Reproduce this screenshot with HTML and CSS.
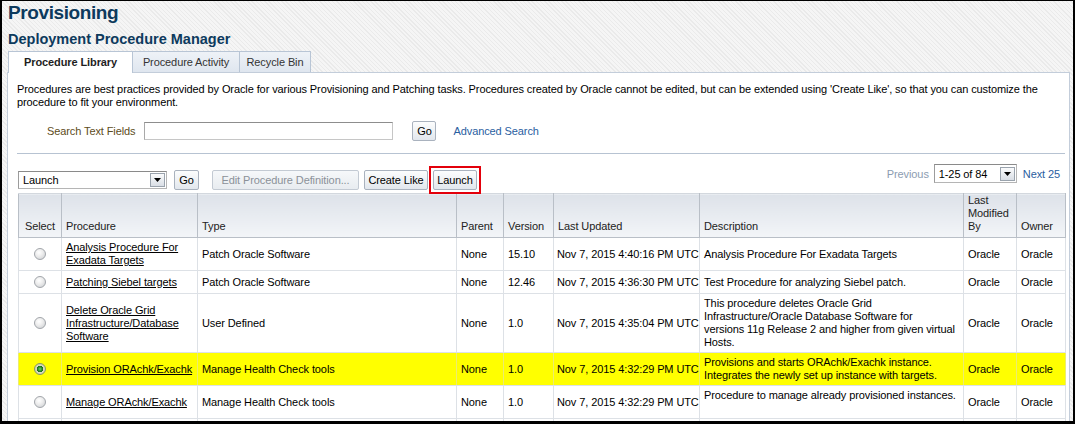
FILE: index.html
```html
<!DOCTYPE html>
<html>
<head>
<meta charset="utf-8">
<title>Provisioning</title>
<link rel="stylesheet" href="styles.css">
</head>
<body>
<div class="frame">
  <h1 class="title">Provisioning</h1>
  <h2 class="subtitle">Deployment Procedure Manager</h2>
  <div class="tabs">
    <span class="tab tab-lib active">Procedure Library</span>
    <span class="tab tab-act">Procedure Activity</span>
    <span class="tab tab-bin">Recycle Bin</span>
  </div>
  <div class="panel">
    <p class="intro">Procedures are best practices provided by Oracle for various Provisioning and Patching tasks. Procedures created by Oracle cannot be edited, but can be extended using 'Create Like', so that you can customize the procedure to fit your environment.</p>
    <div class="search">
      <span class="search-label">Search Text Fields</span>
      <span class="text-input"></span>
      <span class="btn btn-search-go">Go</span>
      <span class="adv-link">Advanced Search</span>
    </div>
    <div class="sep"></div>
    <div class="toolbar">
      <div class="actions">
        <span class="combo combo-action"><span class="combo-value">Launch</span><span class="combo-arrow"><svg width="7" height="4" viewBox="0 0 7 4"><path d="M0 0h7L3.5 4z" fill="#000"/></svg></span></span>
        <span class="btn btn-go">Go</span>
        <span class="btn btn-disabled">Edit Procedure Definition...</span>
        <span class="btn btn-create">Create Like</span>
        <span class="mark"><span class="btn btn-launch">Launch</span></span>
      </div>
      <div class="pager">
        <span class="prev">Previous</span>
        <span class="combo combo-page"><span class="combo-value">1-25 of 84</span><span class="combo-arrow"><svg width="7" height="4" viewBox="0 0 7 4"><path d="M0 0h7L3.5 4z" fill="#000"/></svg></span></span>
        <span class="next">Next 25</span>
      </div>
    </div>
    <table class="grid">
      <colgroup>
        <col class="c-sel"><col class="c-proc"><col class="c-type"><col class="c-par"><col class="c-ver"><col class="c-upd"><col class="c-desc"><col class="c-mod"><col class="c-own">
      </colgroup>
      <thead>
        <tr>
          <th class="th-sel">Select</th>
          <th>Procedure</th>
          <th>Type</th>
          <th>Parent</th>
          <th>Version</th>
          <th>Last Updated</th>
          <th>Description</th>
          <th>Last<br>Modified<br>By</th>
          <th>Owner</th>
        </tr>
      </thead>
      <tbody>
        <tr>
          <td class="sel"><span class="radio"></span></td>
          <td><span class="plink">Analysis Procedure For Exadata Targets</span></td>
          <td>Patch Oracle Software</td>
          <td>None</td>
          <td>15.10</td>
          <td class="upd">Nov 7, 2015 4:40:16 PM UTC</td>
          <td>Analysis Procedure For Exadata Targets</td>
          <td>Oracle</td>
          <td>Oracle</td>
        </tr>
        <tr>
          <td class="sel"><span class="radio"></span></td>
          <td><span class="plink">Patching Siebel targets</span></td>
          <td>Patch Oracle Software</td>
          <td>None</td>
          <td>12.46</td>
          <td class="upd">Nov 7, 2015 4:36:30 PM UTC</td>
          <td>Test Procedure for analyzing Siebel patch.</td>
          <td>Oracle</td>
          <td>Oracle</td>
        </tr>
        <tr>
          <td class="sel"><span class="radio"></span></td>
          <td><span class="plink">Delete Oracle Grid Infrastructure/Database Software</span></td>
          <td>User Defined</td>
          <td>None</td>
          <td>1.0</td>
          <td class="upd">Nov 7, 2015 4:35:04 PM UTC</td>
          <td class="nowrap">This procedure deletes Oracle Grid<br>Infrastructure/Oracle Database Software for<br>versions 11g Release 2 and higher from given virtual<br>Hosts.</td>
          <td>Oracle</td>
          <td>Oracle</td>
        </tr>
        <tr class="hl">
          <td class="sel"><span class="radio on"></span></td>
          <td><span class="plink">Provision ORAchk/Exachk</span></td>
          <td>Manage Health Check tools</td>
          <td>None</td>
          <td>1.0</td>
          <td class="upd">Nov 7, 2015 4:32:29 PM UTC</td>
          <td class="nowrap">Provisions and starts ORAchk/Exachk instance.<br>Integrates the newly set up instance with targets.</td>
          <td>Oracle</td>
          <td>Oracle</td>
        </tr>
        <tr>
          <td class="sel"><span class="radio"></span></td>
          <td><span class="plink">Manage ORAchk/Exachk</span></td>
          <td>Manage Health Check tools</td>
          <td>None</td>
          <td>1.0</td>
          <td class="upd">Nov 7, 2015 4:32:29 PM UTC</td>
          <td class="nowrap">Procedure to manage already provisioned instances.<br>&nbsp;</td>
          <td>Oracle</td>
          <td>Oracle</td>
        </tr>
        <tr>
          <td class="sel"><span class="radio"></span></td>
          <td>&nbsp;</td>
          <td>&nbsp;</td>
          <td>&nbsp;</td>
          <td>&nbsp;</td>
          <td>&nbsp;</td>
          <td>&nbsp;</td>
          <td>&nbsp;</td>
          <td>&nbsp;</td>
        </tr>
      </tbody>
    </table>
  </div>
</div>
</body>
</html>
```
FILE: styles.css
```css
* { box-sizing: border-box; }
html, body { margin: 0; padding: 0; }
body {
  font-family: "Liberation Sans", Arial, sans-serif;
  font-size: 11px;
  letter-spacing: -0.1px;
  color: #000;
  background: #fff;
}
.frame {
  width: 1075px;
  height: 424px;
  border: solid #000;
  border-width: 1px 2px 3px 2px;
  overflow: hidden;
  background: #f3f3f3 repeating-linear-gradient(45deg, #f5f5f5 0 2px, #eaeaea 2px 3px);
}
.title {
  margin: 0;
  padding-left: 6px;
  font-size: 19px;
  letter-spacing: -0.4px;
  line-height: 24px;
  font-weight: bold;
  color: #0d3a5d;
}
.subtitle {
  margin: 6px 0 0;
  padding-left: 6px;
  font-size: 14.5px;
  letter-spacing: 0;
  line-height: 17px;
  font-weight: bold;
  color: #0d3a5d;
}
.tabs {
  display: flex;
  margin: 3px 0 0 6px;
  height: 21px;
}
.tab {
  height: 21px;
  line-height: 20px;
  border: 1px solid #b8c5d5;
  border-bottom: none;
  text-align: center;
  color: #333;
  background: linear-gradient(#eef2f7, #dfe6ef);
  margin-left: -1px;
}
.tab-lib { width: 125px; margin-left: 0; }
.tab-act { width: 108px; }
.tab-bin { width: 72px; }
.tab.active {
  background: #fff;
  font-weight: bold;
  color: #1e1e1e;
  height: 22px;
  position: relative;
  z-index: 1;
}
.panel {
  margin: 0 3px 0 5px;
  height: 360px;
  border: 1px solid #c3cdda;
  background: #fff;
  padding: 10px 4px 0 9px;
}
.intro {
  margin: 0;
  line-height: 13px;
}
.search {
  display: flex;
  align-items: center;
  height: 20px;
  margin-top: 12px;
}
.search-label {
  margin-left: 30px;
  color: #5d4c22;
}
.text-input {
  display: block;
  margin-left: 9px;
  width: 249px;
  height: 18px;
  border: 1px solid #c6c6c6;
  border-top-color: #8d8d8d;
  border-left-color: #a9a9a9;
  background: #fff;
}
.btn {
  display: block;
  height: 20px;
  line-height: 18px;
  padding: 0;
  text-align: center;
  border: 1px solid #a9b2be;
  border-radius: 2px;
  background: linear-gradient(#fcfdfd, #e2e7ed);
  color: #000;
  white-space: nowrap;
}
.btn-search-go { margin-left: 19px; width: 24px; }
.adv-link { margin-left: 17px; color: #2a5e9f; }
.sep {
  height: 0;
  border-top: 1px solid #b7c3d2;
  margin-top: 12px;
}
.toolbar {
  display: flex;
  justify-content: space-between;
  align-items: flex-start;
  margin-top: 10px;
}
.actions {
  display: flex;
  align-items: center;
  margin-top: 2px;
  margin-left: 1px;
}
.combo {
  display: flex;
  align-items: center;
  height: 18px;
  border: 1px solid #b5b5b5;
  border-top-color: #8a8a8a;
  border-left-color: #9c9c9c;
  background: #fff;
}
.combo-value { flex: 1; padding-left: 4px; }
.combo-arrow {
  display: flex;
  align-items: center;
  justify-content: center;
  width: 15px;
  height: 14px;
  margin-right: 1px;
  border: 1px solid #9aa3ad;
  background: linear-gradient(#fafbfc, #d9dee5);
}
.combo-action { width: 149px; }
.btn-go { margin-left: 7px; width: 25px; }
.btn-disabled { margin-left: 13px; width: 147px; color: #8b9199; background: linear-gradient(#f6f8fa, #e8ecf0); border-color: #c3cad3; }
.btn-create { margin-left: 5px; width: 64px; }
.btn-launch { width: 44px; }
.mark {
  display: block;
  margin-left: 1px;
  padding: 2px;
  border: 2px solid #e3000b;
}
.pager {
  display: flex;
  align-items: center;
  height: 19px;
  margin-right: 5px;
}
.prev { color: #8c9cb1; }
.combo-page { width: 83px; height: 19px; margin-left: 5px; }
.next { margin-left: 6px; color: #2a5e9f; }
.grid {
  margin: -1px 0 0 1px;
  width: 1047px;
  border-collapse: collapse;
  table-layout: fixed;
}
.c-sel { width: 43px; }
.c-proc { width: 136px; }
.c-type { width: 259px; }
.c-par { width: 47px; }
.c-ver { width: 50px; }
.c-upd { width: 146px; }
.c-desc { width: 264px; }
.c-mod { width: 53px; }
.c-own { width: 49px; }
.grid th {
  font-weight: normal;
  text-align: left;
  vertical-align: bottom;
  line-height: 13px;
  padding: 0 4px 4px;
  color: #222;
  border: 1px solid #b9bfc7;
  border-top-color: #d3d8de;
  background: linear-gradient(#dde2e9, #f3f5f8);
}
.grid th.th-sel { text-align: center; }
.grid td {
  line-height: 13px;
  padding: 3px 4px;
  vertical-align: middle;
  border: 1px solid #dde1e6;
  background: #fff;
}
.grid td.sel { padding: 3px 0; }
.grid td.upd { white-space: nowrap; padding-left: 3px; padding-right: 0; }
.grid td.nowrap { white-space: nowrap; overflow: hidden; }
.grid tr.hl td { background: #ffff00; border-left-color: #ecec70; border-right-color: #ecec70; }
.radio {
  display: block;
  margin: 2px auto;
  width: 12px;
  height: 12px;
  border-radius: 50%;
  border: 1px solid #a2a6ab;
  background: radial-gradient(circle at 40% 35%, #ffffff 0, #eeeeee 40%, #c9ccd0 100%);
}
.radio.on {
  border-color: #8b9a5c;
  background: radial-gradient(circle at 50% 50%, #6fd36f 0, #2a8f2a 2px, #1a6a1a 3px, #d9dcc4 3.5px, #c4c79a 100%);
}
.plink { color: #000; text-decoration: underline; }
```
